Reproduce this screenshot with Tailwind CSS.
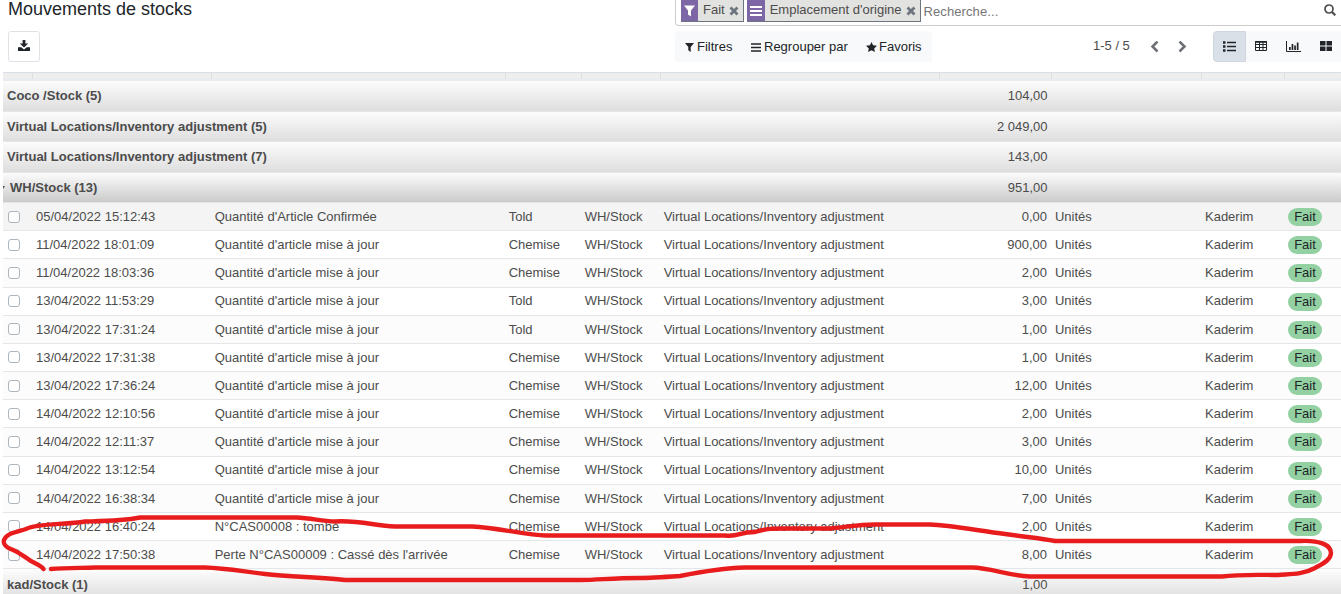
<!DOCTYPE html>
<html lang="fr">
<head>
<meta charset="utf-8">
<title>Mouvements de stocks</title>
<script src="https://cdn.jsdelivr.net/npm/@tailwindcss/browser@4"></script>
</head>
<body class="relative w-[1341px] h-[594px] overflow-hidden bg-white font-['Liberation_Sans',Arial,sans-serif] text-[13px] text-[#4c4c4c]">
<header class="flex h-[72px] justify-between">
  <div class="flex flex-col pl-2">
    <h1 class="h-[31px] text-[18px] leading-[18px] text-[#212529]">Mouvements de stocks</h1>
    <button class="flex h-[31px] w-8 items-center justify-center rounded-[3px] border border-[#dee2e6]">
      <svg class="-mt-0.5" width="12" height="11" viewBox="0 0 12 11" fill="#212529"><path d="M4.600 0h2.800v3.400h2.800L6 7.400 1.800 3.400h2.800zM0 7.200h3.200L6 9.400l2.800-2.200H12V11H0z"/></svg>
    </button>
  </div>
  <div class="flex w-[666px] flex-col">
    <div class="flex h-[26px] items-start rounded-bl border-b border-l border-[#ccc] pl-[5px]">
      <div class="flex h-[22px] items-start border-b border-r border-[#6c757d] bg-[#e2e2e0] pr-1">
        <span class="flex h-[21px] w-[17px] items-center justify-center bg-[#7c66a5]"><svg class="mt-px" width="11" height="12" viewBox="0 0 11 12"><path d="M0 0.500h11L7 5.500V11.500L4 9.500V5.500z" fill="#fff"/></svg></span>
        <span class="pl-[5px] pr-1 leading-[19px]">Fait</span>
        <svg class="mt-[6px]" width="10" height="10" viewBox="0 0 10 10"><path d="M1.500 1.500l7 7M8.500 1.500l-7 7" stroke="#6c757d" stroke-width="2.800"/></svg>
      </div>
      <div class="ml-[3px] flex h-[22px] items-start border-b border-r border-[#6c757d] bg-[#e2e2e0] pr-1">
        <span class="flex h-[21px] w-[18px] items-center justify-center bg-[#7c66a5]"><svg width="12" height="10" viewBox="0 0 12 10"><path d="M0 1h12M0 5h12M0 9h12" stroke="#fff" stroke-width="2"/></svg></span>
        <span class="pl-[5px] pr-1 leading-[19px]">Emplacement d'origine</span>
        <svg class="mt-[6px]" width="10" height="10" viewBox="0 0 10 10"><path d="M1.500 1.500l7 7M8.500 1.500l-7 7" stroke="#6c757d" stroke-width="2.800"/></svg>
      </div>
      <span class="flex-1 pl-[3px] leading-[23px] tracking-[0.1px] text-[#757575]">Recherche...</span>
      <svg class="mr-[5px] mt-1" width="12" height="12" viewBox="0 0 12 12" fill="none" stroke="#4c4c4c"><circle cx="5" cy="5" r="4" stroke-width="1.700"/><path d="M8 8l3.300 3.300" stroke-width="2.200"/></svg>
    </div>
    <div class="mt-[5px] flex h-[31px] items-center text-[#212529]">
      <div class="flex h-full w-[257px] items-center rounded bg-[#f8f9fa] pl-[10px]">
        <svg class="mt-px" width="9" height="9" viewBox="0 0 9 9"><path d="M0 0h9L5.700 4v5L3.300 7.300V4z" fill="#212529"/></svg>
        <span class="w-[57px] pl-[3px]">Filtres</span>
        <svg class="mt-px" width="10" height="9" viewBox="0 0 10 9"><path d="M0 1h10M0 4.500h10M0 8h10" stroke="#212529" stroke-width="1.500"/></svg>
        <span class="w-[105px] pl-[3px]">Regrouper par</span>
        <svg width="11" height="10" viewBox="0 0 11 10"><path d="M5.500 0l1.600 3.300 3.900.5L8.200 6.400 8.900 10 5.500 8.200 2.100 10l.7-3.600L0 3.800l3.900-.5z" fill="#212529"/></svg>
        <span class="pl-[2px]">Favoris</span>
      </div>
      <span class="ml-[161px] w-[57px] pb-0.5 text-[#4c4c4c]">1-5 / 5</span>
      <svg width="37" height="12" viewBox="0 0 37 12" fill="none" stroke="#6c6f73" stroke-width="2.500"><path d="M7.500 .5L2.500 5.500l5 5M29.500 .5l5 5-5 5"/></svg>
      <div class="ml-auto flex h-full w-32 rounded-l bg-[#f8f9fa]">
        <span class="flex w-[33px] items-center justify-center rounded-l border border-[#d0d6de] bg-[#dae0e8]"><svg width="13" height="11" viewBox="0 0 13 11"><path d="M0 1.500h2.500M0 5.500h2.500M0 9.500h2.500" stroke="#212529" stroke-width="2.400"/><path d="M4 1.500h9M4 5.500h9M4 9.500h9" stroke="#212529" stroke-width="1.700"/></svg></span>
        <span class="flex w-[30px] items-center justify-center"><svg class="-mt-px" width="12" height="10" viewBox="0 0 12 10" fill="none" stroke="#212529"><path d="M.5 .5h11v9H.5zM0 3.500h12M0 6.500h12M4.500 1v9M8 1v9"/><path d="M0 1h12" stroke-width="1.600"/></svg></span>
        <span class="flex w-[34px] items-center justify-center"><svg width="15" height="11" viewBox="0 0 15 11"><path d="M.5 0v10.500H15" fill="none" stroke="#212529"/><path d="M3 6h1.700v3H3zM5.600 3h1.700v6H5.600zM8.200 4.500h1.700V9H8.200zM10.800 1.500h1.700V9h-1.700z" fill="#212529"/></svg></span>
        <span class="flex w-[31px] items-center justify-center"><svg class="-mt-px" width="12" height="10" viewBox="0 0 12 10"><path d="M0 0h5.500v4.500H0zM6.500 0H12v4.500H6.500zM0 5.500h5.500V10H0zM6.500 5.500H12V10H6.500z" fill="#212529"/></svg></span>
      </div>
    </div>
  </div>
</header>
<main id="list" class="pl-[3px]">
  <div class="grid h-[9px] grid-cols-[30px_179px_294px_76px_79px_279px_112px_150px_83px_56px] border-t border-[#dbdee6] bg-linear-to-b from-[#eeeeee] from-60% to-[#e9ecef] to-70%">
    <i class="h-1.5 border-r border-[#dbdee2]"></i><i class="h-1.5 border-r border-[#dbdee2]"></i><i class="h-1.5 border-r border-[#dbdee2]"></i><i class="h-1.5 border-r border-[#dbdee2]"></i><i class="h-1.5 border-r border-[#dbdee2]"></i><i class="h-1.5 border-r border-[#dbdee2]"></i><i class="h-1.5 border-r border-[#dbdee2]"></i><i class="h-1.5 border-r border-[#dbdee2]"></i><i class="h-1.5 border-r border-[#dbdee2]"></i>
  </div>
</main>
<svg class="absolute left-0 top-0" width="1341" height="594" viewBox="0 0 1341 594" fill="none" stroke="#e81c1c" stroke-width="4.400" stroke-linecap="round" stroke-linejoin="round">
  <path d="M43.500 569C40 564 33 563 28 559C22 555 18 552 12 549.500C5 547 3 543 4 540C7 533 16 532 26 529C38 523 65 525 85 521.500C105 521 122 521 140 517.500H296C312 518 320 521 335 521.500C360 520 375 526 395 526.500H472C500 528 525 535 546 535.500H725C740 537 738 532 755 532C768 528 775 528.500 790 528.500H830C850 527 855 524.500 875 524.500H930C950 525 980 531 1005 534C1025 537 1040 538 1055 541H1300C1320 540 1331 545 1331 553C1331 560 1322 564 1315 568C1302 575 1290 574 1278 575C1265 575 1240 574 1222 576.500H1030C1005 575 992 568 972 567.500H745C725 568 695 573 680 576C665 577 650 578 640 578C610 578 600 580 580 580H345C320 577 290 577 265 574C240 571 225 568 205 567.500H95C80 568 65 568 51 569"/>
</svg>
<script>
const list = document.getElementById('list');
const group = (name, total, open) => list.insertAdjacentHTML('beforeend',
  `<div class="flex h-[30.5px] items-center border-b border-[#e4e7ea] bg-linear-to-b from-[#fcfcfc] ${open ? 'to-[#cbcbcb]' : 'to-[#dedede]'}">
    ${open ? '<svg class="mr-1" width="3" height="5" viewBox="0 0 3 5"><path d="M0 1h2L0 4z" fill="#4c4c4c"/></svg>' : '<i class="w-1"></i>'}
    <b class="flex-1">${name}</b><span class="mr-[293.5px]">${total}</span></div>`);
group('Coco /Stock (5)', '104,00');
group('Virtual Locations/Inventory adjustment (5)', '2 049,00');
group('Virtual Locations/Inventory adjustment (7)', '143,00');
group('WH/Stock (13)', '951,00', true);
const maj = "Quantité d'article mise à jour";
[
  ['05/04/2022 15:12:43', "Quantité d'Article Confirmée", 'Told', '0,00'],
  ['11/04/2022 18:01:09', maj, 'Chemise', '900,00'],
  ['11/04/2022 18:03:36', maj, 'Chemise', '2,00'],
  ['13/04/2022 11:53:29', maj, 'Told', '3,00'],
  ['13/04/2022 17:31:24', maj, 'Told', '1,00'],
  ['13/04/2022 17:31:38', maj, 'Chemise', '1,00'],
  ['13/04/2022 17:36:24', maj, 'Chemise', '12,00'],
  ['14/04/2022 12:10:56', maj, 'Chemise', '2,00'],
  ['14/04/2022 12:11:37', maj, 'Chemise', '3,00'],
  ['14/04/2022 13:12:54', maj, 'Chemise', '10,00'],
  ['14/04/2022 16:38:34', maj, 'Chemise', '7,00'],
  ['14/04/2022 16:40:24', 'N°CAS00008 : tombé', 'Chemise', '2,00'],
  ['14/04/2022 17:50:38', "Perte N°CAS00009 : Cassé dès l'arrivée", 'Chemise', '8,00'],
].forEach(([date, ref, product, qty], i) => list.insertAdjacentHTML('beforeend',
  `<div class="grid h-[28.18px] grid-cols-[33px_178.7px_294px_76px_79px_279px_112.300px_150px_83px_53px] items-center border-b border-[#e4e7ea] last:h-[29px] ${i === 0 ? 'bg-[#f4f4f4]' : i % 2 ? 'bg-white' : 'bg-[#fcfcfc]'}">
    <i class="ml-[5px] size-3 rounded-[3px] border border-[#adb5bd] bg-white"></i>
    <span>${date}</span><span>${ref}</span><span>${product}</span><span>WH/Stock</span><span>Virtual Locations/Inventory adjustment</span>
    <span class="pr-2 text-right">${qty}</span><span>Unités</span><span>Kaderim</span>
    <span class="mt-px flex h-[18px] w-[34px] items-start justify-center rounded-full bg-[#93d1a2] leading-[17px] text-[#212529]">Fait</span></div>`));
list.insertAdjacentHTML('beforeend', '<div class="h-[0.7px] bg-[#fcfcfc]"></div>');
group('kad/Stock (1)', '1,00');
</script>
</body>
</html>
